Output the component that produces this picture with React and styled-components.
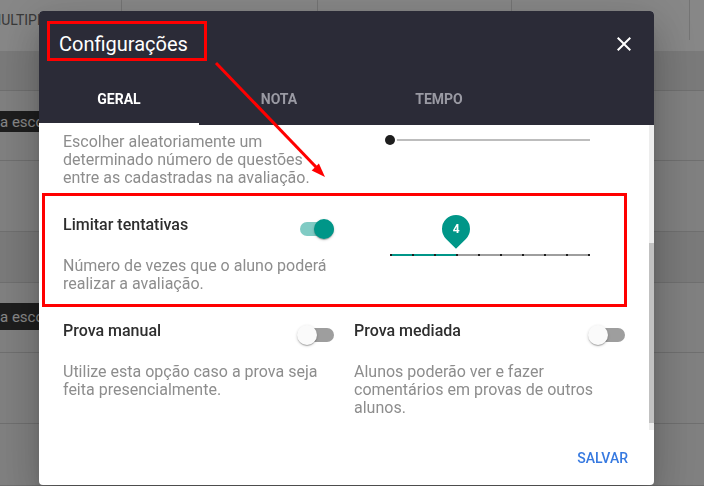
import React, { useLayoutEffect, useRef } from 'react';
import styled, { createGlobalStyle } from 'styled-components';

const GlobalStyle = createGlobalStyle`
  html, body { margin: 0; padding: 0; }
  body {
    width: 704px;
    height: 486px;
    overflow: hidden;
    font-family: Roboto, "Noto Sans", Arial, sans-serif;
    background: #fff;
  }
`;

/* ---------- page behind the dialog ---------- */

const Page = styled.div`
  width: 704px;
  height: 486px;
  overflow: hidden;
  background: #f2f2f2;
`;

const TableHead = styled.div`
  display: grid;
  grid-template-columns: 122px 196px 194px 178px 1fr;
  height: 51px;
  background: #fff;
`;

const HeadCell = styled.div`
  height: 40px;
  display: flex;
  align-items: center;
  overflow: hidden;
  border-right: ${p => (p.$last ? 'none' : '1px solid #dcdcdc')};
`;

const HeadText = styled.span`
  margin-left: -11px;
  font-size: 14px;
  color: #6c6c6c;
  white-space: nowrap;
`;

const GroupRow = styled.div`
  height: ${p => p.$h}px;
  box-sizing: border-box;
  background: #e6e6e6;
  border-bottom: 1px solid #d2d2d2;
`;

const Row = styled.div`
  height: ${p => p.$h}px;
  box-sizing: border-box;
  padding-top: 20px;
  border-bottom: 1px solid #d2d2d2;
`;

const Chip = styled.div`
  display: inline-flex;
  align-items: center;
  height: ${p => p.$h}px;
  padding-right: 12px;
  background: #383838;
  color: #fff;
  font-size: 15px;
  white-space: nowrap;
`;

const Backdrop = styled.div`
  position: fixed;
  inset: 0;
  background: rgba(0, 0, 0, 0.47);
`;

/* ---------- dialog ---------- */

const Dialog = styled.div`
  position: fixed;
  left: 39px;
  top: 11px;
  width: 615px;
  height: 474px;
  display: flex;
  flex-direction: column;
  background: #fff;
  border-radius: 4px;
  overflow: hidden;
  box-shadow: 0 11px 15px -7px rgba(0, 0, 0, 0.2), 0 24px 38px 3px rgba(0, 0, 0, 0.14),
    0 9px 46px 8px rgba(0, 0, 0, 0.12);
`;

const Header = styled.div`
  background: #2b2b37;
`;

const TitleBar = styled.div`
  height: 66px;
  display: flex;
  align-items: center;
  justify-content: space-between;
  padding: 0 18px 0 20px;
`;

const Title = styled.h2`
  margin: 0;
  font-size: 20px;
  font-weight: 400;
  color: #fff;
`;

const CloseButton = styled.button`
  width: 24px;
  height: 24px;
  padding: 0;
  border: none;
  background: none;
  display: flex;
  color: #fff;
`;

const Tabs = styled.div`
  display: flex;
  height: 48px;
`;

const Tab = styled.div`
  width: 160px;
  box-sizing: border-box;
  padding-bottom: 3px;
  display: flex;
  align-items: center;
  justify-content: center;
  font-size: 14px;
  font-weight: 700;
  text-transform: uppercase;
  color: ${p => (p.$active ? '#fff' : '#9a9aa3')};
  border-bottom: 2px solid ${p => (p.$active ? '#fff' : 'transparent')};
`;

const ScrollArea = styled.div`
  display: flex;
  height: 305px;
`;

const Viewport = styled.div`
  position: relative;
  flex: 1;
  overflow: hidden;
`;

const ScrollTrack = styled.div`
  width: 5px;
  flex-shrink: 0;
  display: flex;
  flex-direction: column;
  background: #ededed;
`;

const ScrollThumb = styled.div`
  margin-top: ${p => p.$offset}px;
  height: ${p => p.$size}px;
  background: #c1c1c1;
`;

const Content = styled.div`
  padding: 24px 24px 25px;
  display: flex;
  flex-direction: column;
  gap: 28px;
`;

const Section = styled.div`
  display: grid;
  grid-template-columns: 1fr 1fr;
  column-gap: 20px;
`;

const Field = styled.div`
  display: flex;
  flex-direction: column;
`;

const FieldHead = styled.div`
  height: 20px;
  display: flex;
  align-items: flex-start;
  justify-content: space-between;
`;

const Label = styled.span`
  font-size: 16px;
  line-height: 20px;
  font-weight: 500;
  color: #2e2e2e;
`;

const Desc = styled.p`
  margin: 22px 0 0;
  font-size: 16px;
  line-height: 18px;
  color: #8d8d8d;
`;

const SwitchBox = styled.span`
  position: relative;
  flex-shrink: 0;
  width: 37px;
  height: 20px;
  margin-top: 4px;
`;

const SwitchTrack = styled.span`
  position: absolute;
  left: 3px;
  top: 3px;
  width: 34px;
  height: 14px;
  border-radius: 7px;
  background: ${p => (p.$on ? '#80cbc4' : '#9e9e9e')};
`;

const SwitchKnob = styled.span`
  position: absolute;
  top: 0;
  left: ${p => (p.$on ? '17px' : '0')};
  width: 20px;
  height: 20px;
  border-radius: 50%;
  background: ${p => (p.$on ? '#009688' : '#fafafa')};
  box-shadow: 0 1px 3px rgba(0, 0, 0, 0.2), 0 1px 1px rgba(0, 0, 0, 0.14),
    0 2px 1px -1px rgba(0, 0, 0, 0.12);
`;

const SliderBox = styled.div`
  width: 200px;
  margin: 0 auto;
  padding-top: ${p => p.$pt}px;
`;

const Rail = styled.div`
  position: relative;
  height: 2px;
  display: flex;
  justify-content: space-between;
  background: ${p => (p.$disabled ? '#bdbdbd' : '#9e9e9e')};
`;

const Fill = styled.span`
  position: absolute;
  left: 0;
  top: 0;
  height: 2px;
  background: #009688;
`;

const Tick = styled.span`
  position: relative;
  width: 2px;
  height: 2px;
  background: #1f1f1f;
`;

const Knob = styled.span`
  position: absolute;
  top: -4px;
  width: 10px;
  height: 10px;
  margin-left: -5px;
  border-radius: 50%;
  background: #1e1e1e;
  box-shadow: 0 0 0 2px #fff;
`;

const Pin = styled.span`
  position: absolute;
  top: -39px;
  width: 28px;
  height: 28px;
  margin-left: -14px;
  display: flex;
  align-items: center;
  justify-content: center;
  color: #fff;
  font-size: 12px;
  font-weight: 700;
  &::before {
    content: '';
    position: absolute;
    inset: 0;
    background: #009688;
    border-radius: 50% 50% 50% 0;
    transform: rotate(-45deg);
  }
`;

const PinText = styled.span`
  position: relative;
`;

const Footer = styled.div`
  height: 55px;
  display: flex;
  align-items: center;
  justify-content: flex-end;
  padding-right: 18px;
`;

const TextButton = styled.button`
  border: none;
  background: none;
  padding: 6px 8px;
  font-family: inherit;
  font-size: 14px;
  font-weight: 500;
  color: #3679e0;
  text-transform: uppercase;
`;

const Annotations = styled.svg`
  position: fixed;
  left: 0;
  top: 0;
  pointer-events: none;
`;

function Switch({ on }) {
  return (
    <SwitchBox>
      <SwitchTrack $on={on} />
      <SwitchKnob $on={on} />
    </SwitchBox>
  );
}

function Slider({ value, min, max, pt, disabled }) {
  const pct = ((value - min) / (max - min)) * 100;
  const ticks = [];
  for (let i = min; i <= max; i++) ticks.push(i);
  return (
    <SliderBox $pt={pt}>
      <Rail $disabled={disabled}>
        {!disabled && <Fill style={{ width: pct + '%' }} />}
        {!disabled && ticks.map(t => <Tick key={t} />)}
        {disabled ? (
          <Knob style={{ left: pct + '%' }} />
        ) : (
          <Pin style={{ left: pct + '%' }}>
            <PinText>{value}</PinText>
          </Pin>
        )}
      </Rail>
    </SliderBox>
  );
}

function Setting({ label, desc, on }) {
  return (
    <Field>
      <FieldHead>
        <Label>{label}</Label>
        <Switch on={on} />
      </FieldHead>
      <Desc>{desc}</Desc>
    </Field>
  );
}

export default function App() {
  const scrollRef = useRef(null);
  const anchorRef = useRef(null);

  useLayoutEffect(() => {
    if (scrollRef.current && anchorRef.current) {
      scrollRef.current.scrollTop = anchorRef.current.offsetTop + 34;
    }
  }, []);

  return (
    <>
      <GlobalStyle />
      <Page>
        <TableHead>
          <HeadCell><HeadText>MULTIPLA ESCOLHA</HeadText></HeadCell>
          <HeadCell />
          <HeadCell />
          <HeadCell />
          <HeadCell $last />
        </TableHead>
        <GroupRow $h={40} />
        <Row $h={70}><Chip $h={21}>a escolha correta</Chip></Row>
        <Row $h={71} />
        <GroupRow $h={51} />
        <Row $h={70}><Chip $h={27}>a escolha correta</Chip></Row>
        <Row $h={71} />
        <Row $h={62} />
      </Page>
      <Backdrop />
      <Dialog>
        <Header>
          <TitleBar>
            <Title>Configurações</Title>
            <CloseButton aria-label="Fechar">
              <svg width="24" height="24" viewBox="0 0 24 24" fill="currentColor">
                <path d="M19 6.41L17.59 5 12 10.59 6.41 5 5 6.41 10.59 12 5 17.59 6.41 19 12 13.41 17.59 19 19 17.59 13.41 12z" />
              </svg>
            </CloseButton>
          </TitleBar>
          <Tabs>
            <Tab $active>Geral</Tab>
            <Tab>Nota</Tab>
            <Tab>Tempo</Tab>
          </Tabs>
        </Header>
        <ScrollArea>
          <Viewport ref={scrollRef}>
            <Content>
              <Section>
                <Setting
                  label="Embaralhar questões"
                  desc="As questões serão apresentadas em ordem aleatória para cada aluno."
                />
                <Setting
                  label="Embaralhar alternativas"
                  desc="As alternativas de cada questão serão apresentadas em ordem aleatória."
                />
              </Section>
              <Section ref={anchorRef}>
                <Setting
                  label="Sortear questões"
                  desc="Escolher aleatoriamente um determinado número de questões entre as cadastradas na avaliação."
                />
                <Slider value={0} min={0} max={10} pt={48} disabled />
              </Section>
              <Section>
                <Setting
                  label="Limitar tentativas"
                  on
                  desc="Número de vezes que o aluno poderá realizar a avaliação."
                />
                <Slider value={4} min={1} max={10} pt={39} />
              </Section>
              <Section>
                <Setting
                  label="Prova manual"
                  desc="Utilize esta opção caso a prova seja feita presencialmente."
                />
                <Setting
                  label="Prova mediada"
                  desc="Alunos poderão ver e fazer comentários em provas de outros alunos."
                />
              </Section>
            </Content>
          </Viewport>
          <ScrollTrack>
            <ScrollThumb $offset={118} $size={180} />
          </ScrollTrack>
        </ScrollArea>
        <Footer>
          <TextButton>Salvar</TextButton>
        </Footer>
      </Dialog>
      <Annotations width="704" height="486" viewBox="0 0 704 486">
        <rect x="48.5" y="22.5" width="157" height="37" fill="none" stroke="#ff0000" strokeWidth="3" />
        <rect x="43.5" y="194.5" width="582" height="111" fill="none" stroke="#ff0000" strokeWidth="3" />
        <line x1="216" y1="63" x2="316" y2="167" stroke="#ff0000" strokeWidth="3" />
        <polygon points="325,177 311.7,170.4 318.9,163.4" fill="#ff0000" />
      </Annotations>
    </>
  );
}
